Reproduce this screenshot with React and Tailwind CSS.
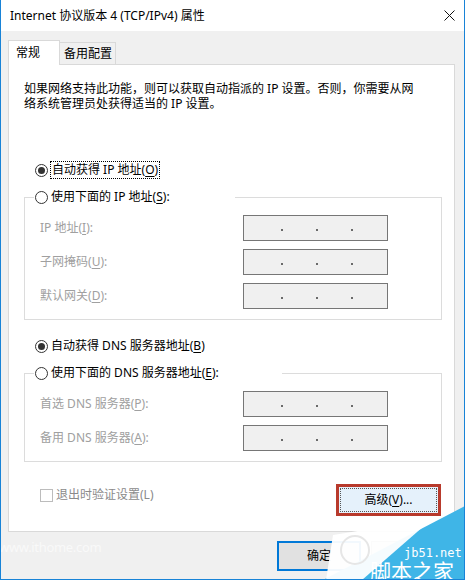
import React from "react";

// Windows 10 风格的 IPv4 属性对话框
const Radio = ({ checked }) => (
  <span className="w-[13px] h-[13px] rounded-full border border-[#333] bg-white flex items-center justify-center shrink-0">
    {checked && <span className="w-[7px] h-[7px] rounded-full bg-[#333]" />}
  </span>
);

const IpBox = () => (
  <div className="w-[145px] h-[26px] border border-[#767676] bg-[#f0f0f0] flex items-center pl-[37px] gap-[33px]">
    <span className="w-[2px] h-[2px] mt-[4px] bg-[#6a6a6a]" />
    <span className="w-[2px] h-[2px] mt-[4px] bg-[#6a6a6a]" />
    <span className="w-[2px] h-[2px] mt-[4px] bg-[#6a6a6a]" />
  </div>
);

const Row = ({ label, k, first }) => (
  <div className={`flex items-center h-[26px] pl-[15px] ${first ? "mt-[9px]" : "mt-[8px]"}`}>
    <span className="w-[203px] text-[#a0a0a0]">
      {label}(<u className="underline-offset-2">{k}</u>):
    </span>
    <IpBox />
  </div>
);

const Group = ({ legendWidth, title, k, children }) => (
  <fieldset className="mt-[9px] border border-[#dcdcdc] p-0 m-0 w-[418px]">
    <legend className={`ml-[9px] p-0 h-[18px] flex items-center ${legendWidth}`}>
      <span className="ml-[1px]"><Radio /></span>
      <span className="ml-[3px] leading-[18px]">
        {title}(<u className="underline-offset-2">{k}</u>):
      </span>
    </legend>
    {children}
    <div className="h-[10px]" />
  </fieldset>
);

export default function App() {
  return (
    <div className="relative w-[465px] h-[580px] bg-[#f0f0f0] border-x border-b border-[#1883d7] overflow-hidden font-['Noto_Sans','Noto_Sans_CJK_SC',sans-serif] text-[12px] text-black">
      {/* 标题栏 */}
      <div className="h-[31px] bg-white flex items-center justify-between pl-[9px] pr-[8px]">
        <span className="leading-none">Internet 协议版本 4 (TCP/IPv4) 属性</span>
        <svg width="11" height="11" viewBox="0 0 11 11" className="mr-[1px]">
          <path d="M0.5 0.5 L10.5 10.5 M10.5 0.5 L0.5 10.5" stroke="#111" strokeWidth="1" />
        </svg>
      </div>

      {/* 选项卡 */}
      <div className="mt-[9px] ml-[7px] flex items-end h-[24px]">
        <div className="relative z-10 -mb-px h-[25px] w-[52px] border border-b-0 border-[#d9d9d9] bg-white flex items-center pl-[7px]">
          常规
        </div>
        <div className="-ml-px h-[22px] w-[57px] border border-b-0 border-[#d9d9d9] bg-[#f0f0f0] flex items-center pl-[4px]">
          备用配置
        </div>
      </div>

      {/* 面板 */}
      <div className="ml-[7px] w-[447px] h-[468px] border border-[#d9d9d9] bg-white pl-[15px] pr-[12px]">
        <p className="pt-[16px] leading-[15px]">
          如果网络支持此功能，则可以获取自动指派的 IP 设置。否则，你需要从网
          <br />
          络系统管理员处获得适当的 IP 设置。
        </p>

        <div className="mt-[50px] h-[18px] flex items-center">
          <span className="ml-[11px]"><Radio checked /></span>
          <span className="ml-[2px] px-[1px] border border-dotted border-black leading-[16px]">
            自动获得 IP 地址(<u className="underline-offset-2">O</u>)
          </span>
        </div>

        <Group legendWidth="w-[201px]" title="使用下面的 IP 地址" k="S">
          <Row label="IP 地址" k="I" first />
          <Row label="子网掩码" k="U" />
          <Row label="默认网关" k="D" />
        </Group>

        <div className="mt-[17px] h-[18px] flex items-center">
          <span className="ml-[11px]"><Radio checked /></span>
          <span className="ml-[3px]">
            自动获得 DNS 服务器地址(<u className="underline-offset-2">B</u>)
          </span>
        </div>

        <Group legendWidth="w-[248px]" title="使用下面的 DNS 服务器地址" k="E">
          <Row label="首选 DNS 服务器" k="P" first />
          <Row label="备用 DNS 服务器" k="A" />
        </Group>

        <div className="mt-[22px] h-[32px] flex items-start">
          <span className="ml-[16px] mt-[5px] w-[13px] h-[13px] border border-[#bcbcbc] bg-white shrink-0" />
          <span className="ml-[3px] mt-[3px] leading-[16px] text-[#8a8a8a]">退出时验证设置(L)</span>
          <div className="ml-auto mr-[1px] w-[105px] h-[32px] border-[3px] border-[#b83a2c] bg-[#e5f1fb] p-[1px]">
            <div className="w-full h-full border border-dotted border-[#555] flex items-center justify-center">
              高级(<u className="underline-offset-2">V</u>)...
            </div>
          </div>
        </div>
      </div>

      {/* 底部按钮 */}
      <div className="mt-[9px] flex justify-end gap-[10px] pr-[9px]">
        <div className="w-[84px] h-[30px] border-2 border-[#0078d7] bg-[#e1e1e1] flex items-center justify-center">确定</div>
        <div className="w-[84px] h-[30px] border border-[#adadad] bg-[#e1e1e1] flex items-center justify-center">取消</div>
      </div>

      {/* 淡色水印 */}
      <span className="absolute left-[-2px] top-[538px] text-[13px] text-[#f9f9f9] tracking-tight">www.ithome.com</span>

      {/* jb51 水印 */}
      <svg className="absolute right-[-1px] bottom-[-1px]" width="145" height="76" viewBox="0 0 145 76">
        <polygon points="145,2 145,76 3,76" fill="#3fb5e7" />
        <polygon points="6,76 13,31 112,15 42,76" fill="#ffffff" opacity="0.95" />
        <circle cx="35" cy="46" r="14" fill="none" stroke="#e6e6e6" strokeWidth="2" />
      </svg>
      <span className="absolute left-[403px] top-[547px] font-['DejaVu_Sans_Mono',monospace] text-[12px] leading-none text-white">jb51.net</span>
      <span className="absolute left-[369px] top-[560px] font-['Noto_Sans_CJK_SC',sans-serif] text-[21px] leading-none text-white">脚本之家</span>
    </div>
  );
}
